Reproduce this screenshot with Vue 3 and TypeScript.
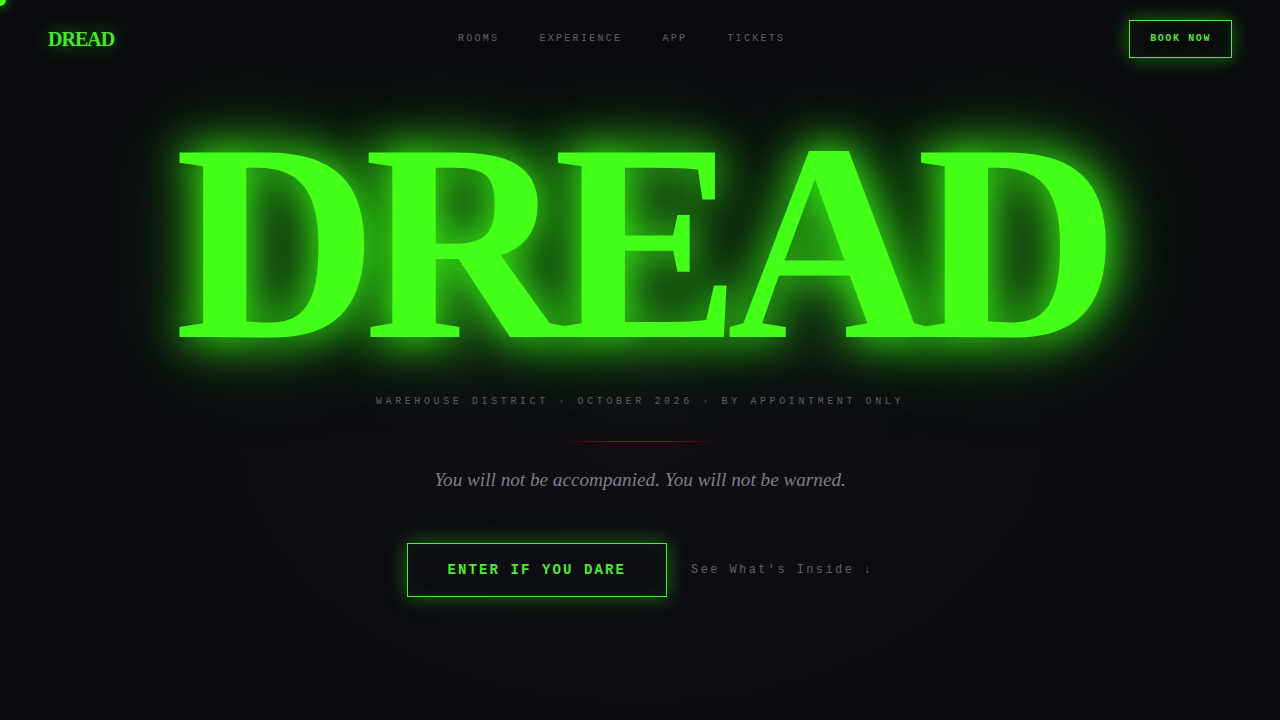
<script setup lang="ts">
interface NavItem {
  label: string
  href: string
}

const navItems: NavItem[] = [
  { label: 'ROOMS', href: '#rooms' },
  { label: 'EXPERIENCE', href: '#experience' },
  { label: 'APP', href: '#app' },
  { label: 'TICKETS', href: '#tickets' },
]
</script>

<template>
  <div class="page">
    <div class="texture" aria-hidden="true"></div>
    <div class="cursor" aria-hidden="true"></div>

    <header class="nav">
      <a class="logo" href="#top">DREAD</a>
      <nav class="links" aria-label="Main">
        <a v-for="item in navItems" :key="item.label" :href="item.href">{{ item.label }}</a>
      </nav>
      <button class="neon book" type="button">BOOK NOW</button>
    </header>

    <main class="hero">
      <h1 class="title">DREAD</h1>
      <p class="meta">WAREHOUSE DISTRICT · OCTOBER 2026 · BY APPOINTMENT ONLY</p>
      <div class="divider"></div>
      <p class="tagline">You will not be accompanied. You will not be warned.</p>
      <div class="actions">
        <button class="neon enter" type="button">ENTER IF YOU DARE</button>
        <a class="inside" href="#inside">See What's Inside ↓</a>
      </div>
    </main>
  </div>
</template>

<style>
html,
body {
  background: #0b0b0f;
}
</style>

<style scoped>
.page {
  position: relative;
  min-height: 100vh;
  overflow: hidden;
  background:
    radial-gradient(ellipse at 50% 60%, #0e0e14 0%, #0b0b10 50%, transparent 75%),
    #0b0b0f;
  font-family: "Liberation Mono", "Courier New", monospace;
}

.texture {
  position: absolute;
  inset: 0 0 0 90%;
  background:
    repeating-linear-gradient(45deg, transparent 0 6px, rgba(0, 0, 0, 0.15) 6px 8px),
    rgba(10, 24, 10, 0.1);
}

.cursor {
  position: absolute;
  top: -6px;
  left: -6px;
  width: 12px;
  height: 12px;
  border-radius: 50%;
  background: #44ff17;
  box-shadow: 0 0 12px rgba(57, 255, 20, 0.6);
}

.nav {
  position: relative;
  display: flex;
  align-items: center;
  justify-content: space-between;
  padding: 20px 48px;
}

.logo {
  font-family: "Liberation Serif", "Times New Roman", serif;
  font-size: 20px;
  font-weight: 700;
  line-height: 24px;
  letter-spacing: -0.05em;
  color: #46e828;
  text-decoration: none;
  text-shadow: 0 0 20px rgba(57, 255, 20, 0.5);
}

.links {
  display: flex;
  gap: 40px;
}

.links a {
  font-size: 10px;
  line-height: 12px;
  letter-spacing: 0.23em;
  color: #626264;
  text-decoration: none;
}

.neon {
  border: 1px solid #56e84a;
  background: transparent;
  color: #50e834;
  font-family: inherit;
  font-weight: 700;
  cursor: pointer;
  box-shadow:
    0 0 20px rgba(57, 255, 20, 0.4),
    inset 0 0 20px rgba(57, 255, 20, 0.07);
}

.book {
  padding: 12px 20px;
  font-size: 10px;
  line-height: 12px;
  letter-spacing: 0.16em;
}

.hero {
  position: relative;
  display: flex;
  flex-direction: column;
  align-items: center;
  padding: 45px 24px 0;
  text-align: center;
}

.title {
  margin: 0;
  font-family: "Liberation Serif", "Times New Roman", serif;
  font-size: 22vw;
  font-weight: 700;
  line-height: 0.85;
  letter-spacing: -0.05em;
  white-space: nowrap;
  color: #44ff17;
  text-shadow:
    0 0 40px rgba(57, 255, 20, 0.95),
    0 0 60px rgba(57, 255, 20, 0.4),
    0 0 100px rgba(57, 255, 20, 0.4);
}

.meta {
  margin: 32px 0 0;
  font-size: 10px;
  line-height: 16px;
  letter-spacing: 0.36em;
  color: #5c6062;
}

.divider {
  width: 160px;
  height: 1px;
  margin: 31px 0 24px;
  background: linear-gradient(90deg, transparent, #8b0000 30%, #8b0000 70%, transparent);
  box-shadow: 0 0 4px rgba(139, 0, 0, 0.25);
}

.tagline {
  margin: 0;
  font-family: "Liberation Serif", "Times New Roman", serif;
  font-size: 1.5vw;
  font-style: italic;
  line-height: 28px;
  color: #7f7f83;
}

.actions {
  display: flex;
  flex-wrap: wrap;
  align-items: center;
  justify-content: center;
  gap: 24px;
  margin-top: 49px;
}

.enter {
  padding: 18px 40px;
  font-size: 14px;
  line-height: 16px;
  letter-spacing: 0.15em;
}

.inside {
  font-size: 12px;
  line-height: 16px;
  letter-spacing: 0.2em;
  color: #626264;
  text-decoration: none;
}
</style>
